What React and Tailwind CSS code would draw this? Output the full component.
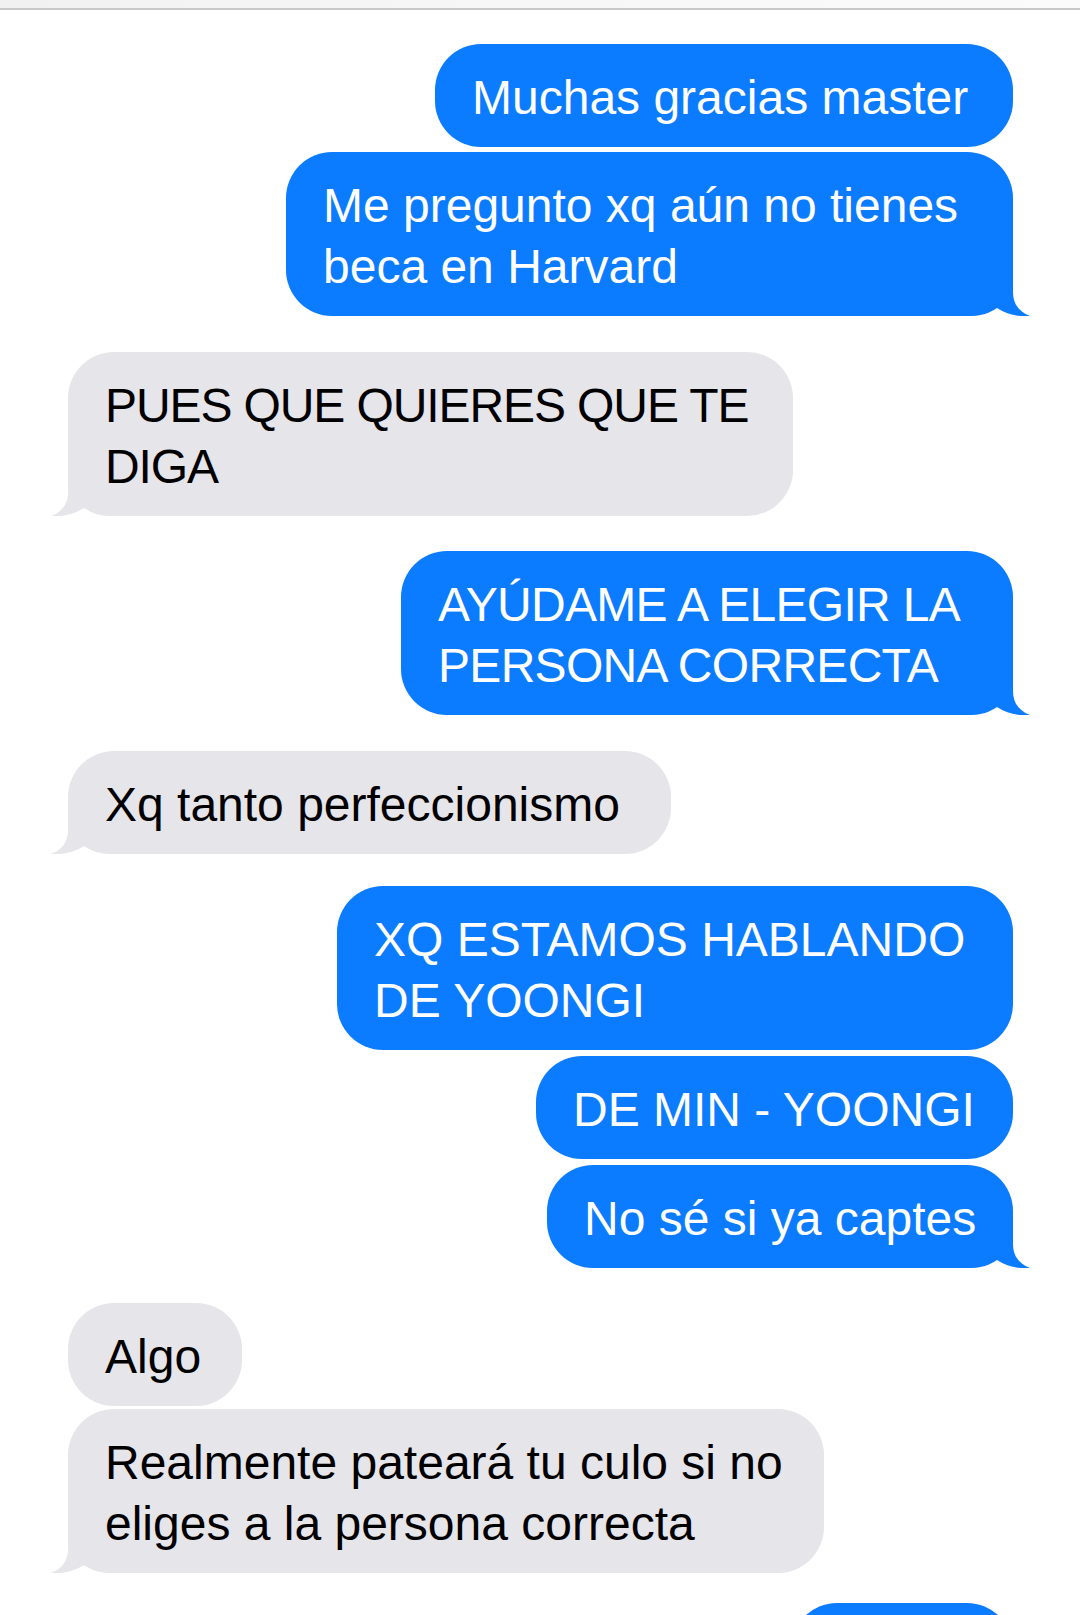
import React from 'react';

const messages = [
  { me: true, lines: ['Muchas gracias master'], w: 578, mt: 34 },
  { me: true, lines: ['Me pregunto xq aún no tienes', 'beca en Harvard'], w: 727, mt: 5, tail: true },
  { me: false, lines: ['PUES QUE QUIERES QUE TE', 'DIGA'], w: 725, mt: 36, tail: true, track: 'tracking-[-1.1px]' },
  { me: true, lines: ['AYÚDAME A ELEGIR LA', 'PERSONA CORRECTA'], w: 612, mt: 35, tail: true, track: 'tracking-[-0.7px]' },
  { me: false, lines: ['Xq tanto perfeccionismo'], w: 603, mt: 36, tail: true },
  { me: true, lines: ['XQ ESTAMOS HABLANDO', 'DE YOONGI'], w: 676, mt: 32 },
  { me: true, lines: ['DE MIN - YOONGI'], w: 477, mt: 6 },
  { me: true, lines: ['No sé si ya captes'], w: 466, mt: 6, tail: true },
  { me: false, lines: ['Algo'], w: 174, mt: 35 },
  { me: false, lines: ['Realmente pateará tu culo si no', 'eliges a la persona correcta'], w: 756, mt: 3, tail: true },
  { me: true, lines: [], w: 222, mt: 30 },
];

function Tail({ me }) {
  // bubble corner + curled tail, drawn over the bottom corner
  return (
    <svg
      width="64"
      height="50"
      viewBox="0 0 64 50"
      className={me ? 'absolute bottom-0 right-[-17px]' : 'absolute bottom-0 left-[-17px] -scale-x-100'}
    >
      <path
        d="M0 0 H47 V26 C47 38 53 46 64 50 C54 51 42 49 31 42 C24 47 15 50 4 50 H0 Z"
        fill={me ? '#0b7bff' : '#e5e5ea'}
      />
    </svg>
  );
}

export default function App() {
  return (
    <div className="h-[1615px] overflow-hidden bg-white font-['Liberation_Sans',Arial,sans-serif]">
      <div className="h-[8px] bg-gradient-to-r from-[#f1f1f1] via-[#f7f7f7] to-[#fbfbfb]" />
      <div className="h-[2px] bg-[#c8c8c8]" />

      <div className="flex flex-col pl-[68px] pr-[67px]">
        {messages.map((m, i) => (
          <div
            key={i}
            className={`flex ${m.me ? 'justify-end' : 'justify-start'}`}
            style={{ marginTop: m.mt }}
          >
            <div
              className={`relative min-h-[103px] rounded-[46px] px-[37px] pt-[23px] pb-[19px] text-[48px] leading-[61px] ${
                m.track || ''
              } ${m.me ? 'bg-[#0b7bff] text-white' : 'bg-[#e5e5ea] text-black'}`}
              style={{ width: m.w }}
            >
              {m.lines.map((l, j) => (
                <div key={j} className="relative z-10 whitespace-nowrap">{l}</div>
              ))}
              {m.tail && <Tail me={m.me} />}
            </div>
          </div>
        ))}
      </div>
    </div>
  );
}
